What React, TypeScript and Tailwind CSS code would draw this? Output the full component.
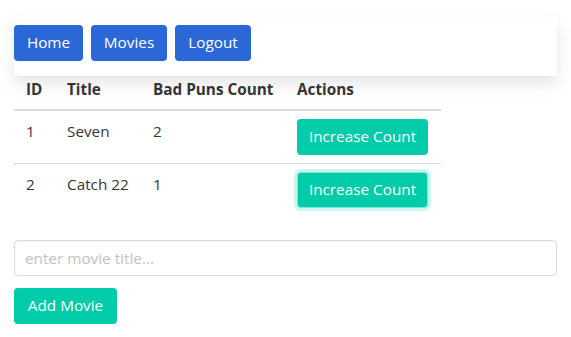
import { useState } from "react";

interface Movie {
  readonly id: number;
  readonly title: string;
  readonly count: number;
}

const navLinks = [
  { label: "Home", w: "w-[69px]" },
  { label: "Movies", w: "w-[76px]" },
  { label: "Logout", w: "w-[76px]" },
];

export default function App() {
  const [movies] = useState<Movie[]>([
    { id: 1, title: "Seven", count: 2 },
    { id: 2, title: "Catch 22", count: 1 },
  ]);

  return (
    <div
      className="min-h-[337px] bg-white px-[14px] pt-[17px] text-[15.3px] text-[#363636]"
      style={{ fontFamily: '"Open Sans", "Noto Sans", sans-serif' }}
    >
      <nav className="relative z-10 flex h-[59px] gap-2 bg-white pt-2 shadow-[0_8px_16px_rgba(10,10,10,0.1)]">
        {navLinks.map((l) => (
          <button
            key={l.label}
            className={`${l.w} h-9 rounded-[4px] bg-[#2c67d7] text-[15.3px] leading-none text-white`}
          >
            {l.label}
          </button>
        ))}
      </nav>

      <table className="-mt-[7px] w-[427px] table-fixed border-collapse text-left">
        <thead>
          <tr className="border-b-2 border-[#dbdbdb]">
            <th className="w-[41px] px-3 py-2 leading-6 font-bold">ID</th>
            <th className="w-[86px] px-3 py-2 leading-6 font-bold">Title</th>
            <th className="w-[144px] px-3 py-2 leading-6 font-bold whitespace-nowrap">
              Bad Puns Count
            </th>
            <th className="px-3 py-2 leading-6 font-bold">Actions</th>
          </tr>
        </thead>
        <tbody>
          {movies.map((m, i) => (
            <tr
              key={m.id}
              className={i < movies.length - 1 ? "border-b border-[#dbdbdb]" : ""}
            >
              <td className="px-3 py-2 align-top leading-6">{m.id}</td>
              <td className="px-3 py-2 align-top leading-6 whitespace-nowrap">{m.title}</td>
              <td className="px-3 py-2 align-top leading-6">{m.count}</td>
              <td className="px-3 py-2 align-top">
                <button
                  className={`h-9 w-[131px] rounded-[4px] bg-[#00cca9] text-[15.3px] leading-none text-white ${
                    i === 1 ? "border border-[#7de6d4] ring-[3px] ring-[#00d1b2]/20" : ""
                  }`}
                >
                  Increase Count
                </button>
              </td>
            </tr>
          ))}
        </tbody>
      </table>

      <input
        placeholder="enter movie title..."
        className="mt-6 block h-9 w-full rounded-[4px] border border-[#dbdbdb] px-[10px] text-[15.3px] shadow-[inset_0_1px_2px_rgba(10,10,10,0.05)] outline-none placeholder:text-[#c2c2c2]"
      />

      <button className="mt-3 h-9 w-[103px] rounded-[4px] bg-[#00cca9] text-[15.3px] leading-none text-white">
        Add Movie
      </button>
    </div>
  );
}
